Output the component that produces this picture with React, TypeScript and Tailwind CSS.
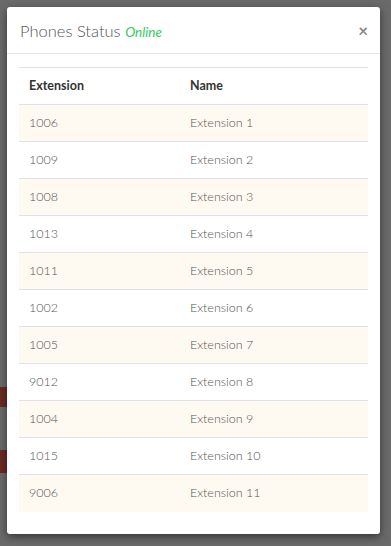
const rows = [
  ['1006', 'Extension 1'],
  ['1009', 'Extension 2'],
  ['1008', 'Extension 3'],
  ['1013', 'Extension 4'],
  ['1011', 'Extension 5'],
  ['1002', 'Extension 6'],
  ['1005', 'Extension 7'],
  ['9012', 'Extension 8'],
  ['1004', 'Extension 9'],
  ['1015', 'Extension 10'],
  ['9006', 'Extension 11'],
];

const App = () => {
  return (
    <div className="relative h-[546px] w-[391px] overflow-hidden bg-[#6a6a6a] font-['Lato',sans-serif]">
      {/* dimmed page behind the modal */}
      <div className="flex h-full flex-col pt-[387px]">
        <div className="h-[20px] w-[8px] bg-[#6b2a22]" />
        <div className="mt-[43px] h-[23px] w-[8px] bg-[#6b2a22]" />
      </div>

      <div className="absolute left-[7px] top-[7px] flex h-[527px] w-[373px] flex-col rounded-[3px] bg-white shadow-[0_3px_9px_rgba(0,0,0,0.5)]">
        <div className="flex h-[47px] items-center justify-between border-b border-[#e5e5e5] pl-[13px] pr-[12px]">
          <h4 className="pt-[2px] text-[16.5px] font-light text-[#555]">
            Phones Status{' '}
            <span className="text-[13.5px] italic font-normal text-[#2fcc5f]">Online</span>
          </h4>
          <button className="text-[17px] font-bold leading-none text-[#888]">×</button>
        </div>

        <div className="px-[12px] pt-[13px]">
          <table className="w-full border-collapse border-t border-[#dee2e6] text-[12.5px]">
            <thead>
              <tr className="h-[37px] border-b border-[#dee2e6] text-left text-[#333]">
                <th className="w-[171px] pl-[10px] font-bold">Extension</th>
                <th className="font-bold">Name</th>
              </tr>
            </thead>
            <tbody>
              {rows.map(([ext, name], i) => (
                <tr
                  key={ext}
                  className={
                    i % 2 === 0
                      ? 'h-[37px] border-t border-[#dee2e6] bg-[#fffaf1] text-[#555] first:border-t-0'
                      : 'h-[37px] border-t border-[#dee2e6] bg-white text-[#555]'
                  }
                >
                  <td className="pl-[10px] pt-[1px] font-light">{ext}</td>
                  <td className="pt-[1px] font-light">{name}</td>
                </tr>
              ))}
            </tbody>
          </table>
        </div>
      </div>
    </div>
  );
};

export default App;
